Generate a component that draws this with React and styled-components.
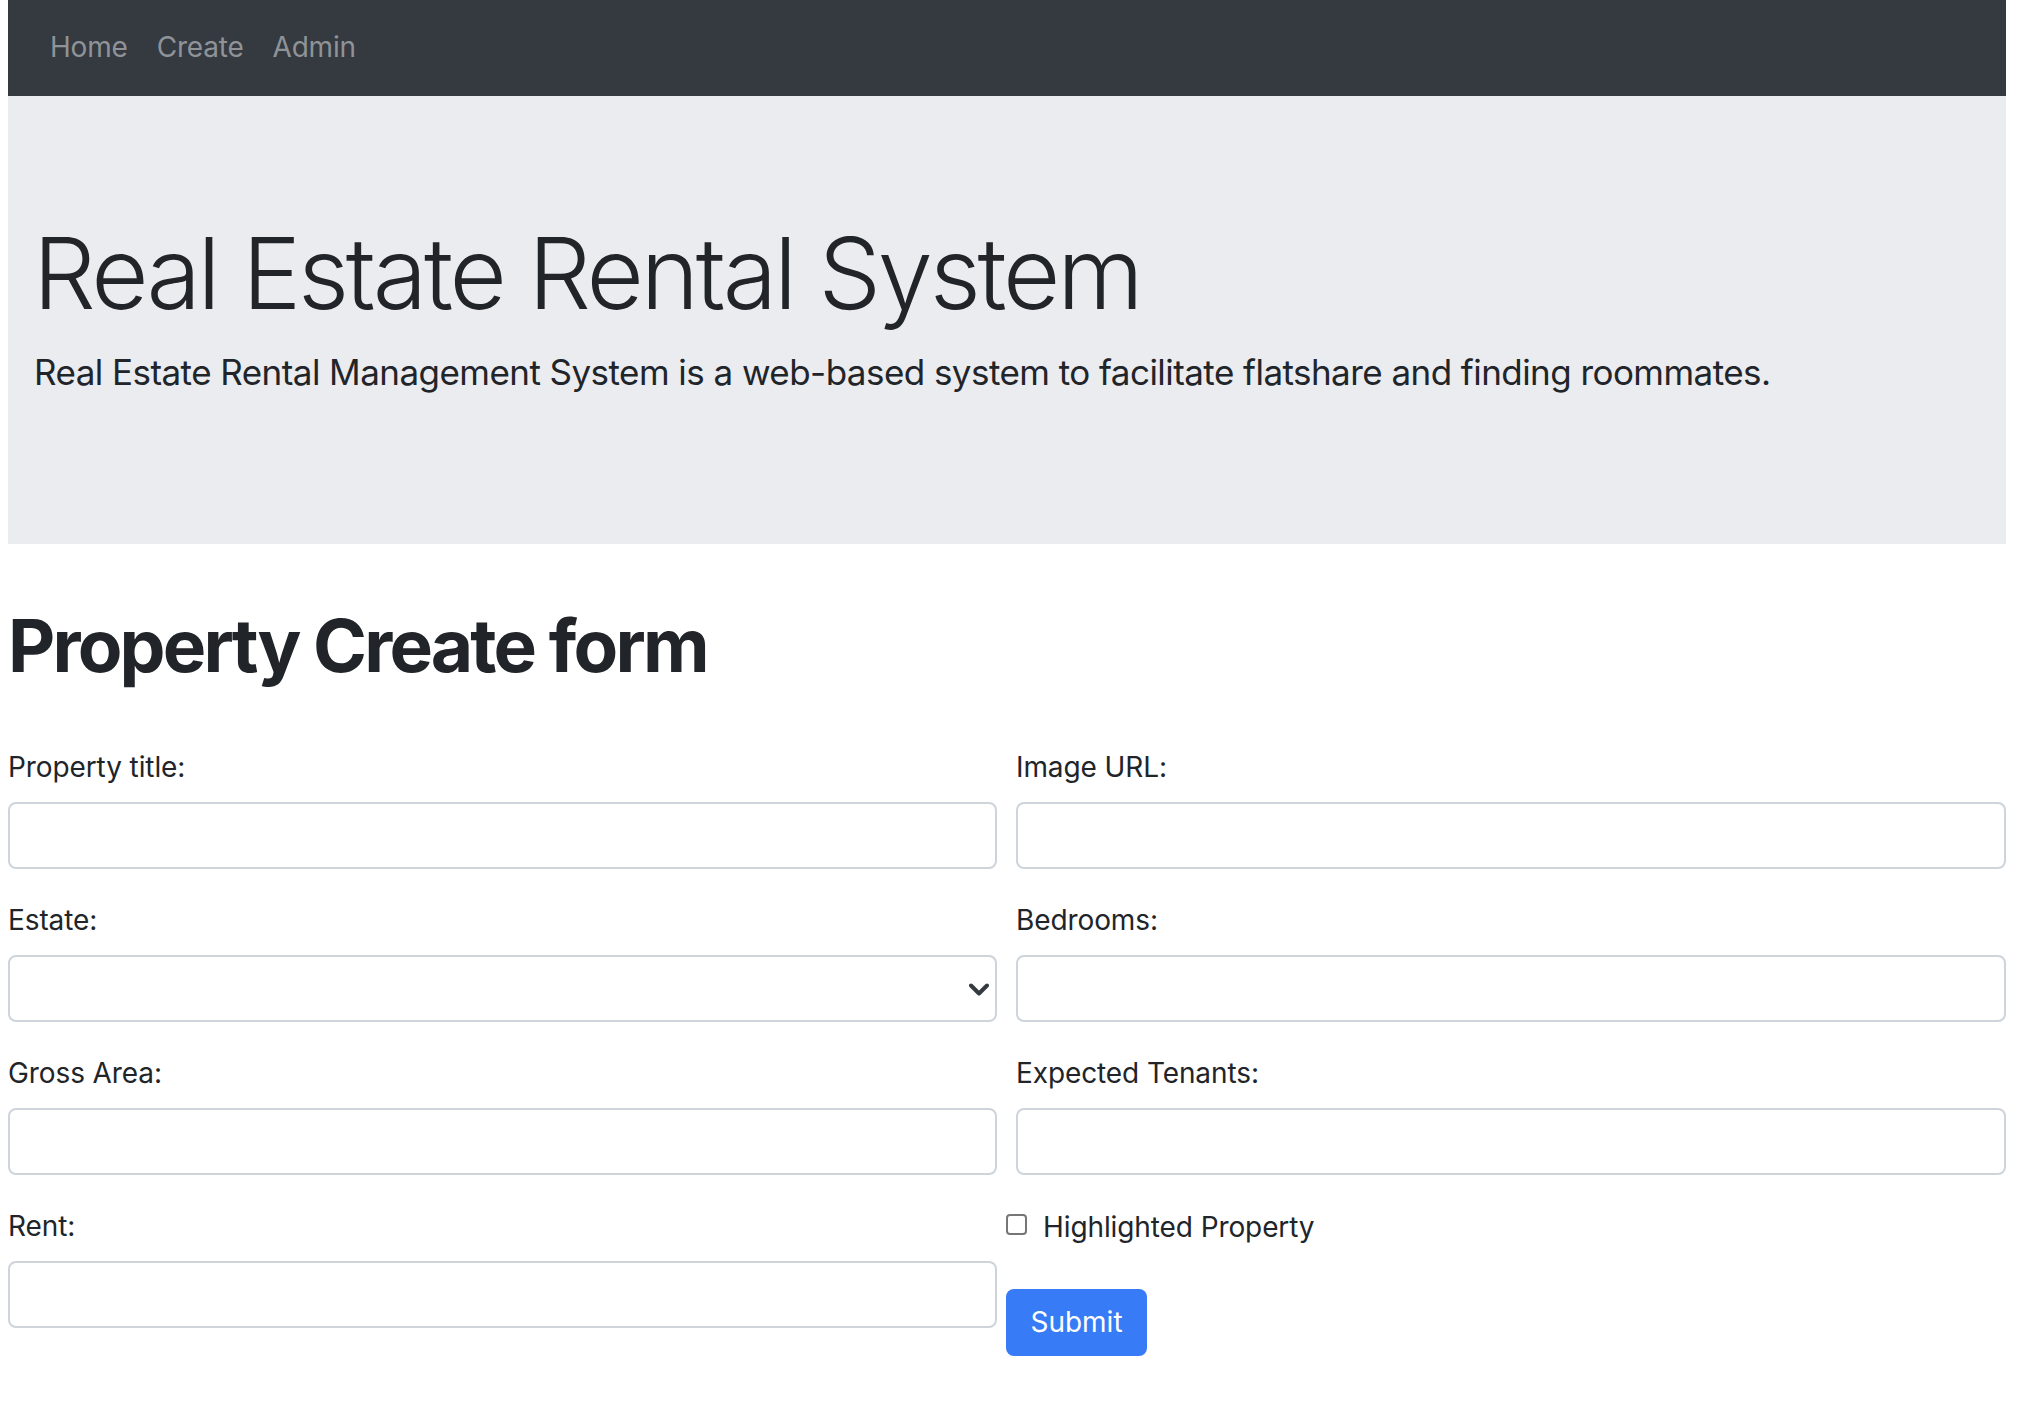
import React from 'react'
import styled, { createGlobalStyle } from 'styled-components'

const GlobalStyle = createGlobalStyle`
  * { box-sizing: border-box; }
  body {
    margin: 0;
    background: #fff;
    color: #212529;
    font-family: Inter, "Noto Sans", "Liberation Sans", sans-serif;
  }
`;

const Page = styled.div`
  padding: 0 18px 0 8px;
`;

const NavBar = styled.nav`
  background-color: #343a40;
  height: 96px;
  display: flex;
  align-items: center;
  gap: 29px;
  padding: 0 0 2px 42px;
`;

const NavLink = styled.a`
  font-size: 28px;
  color: #8f9398;
  text-decoration: none;
  letter-spacing: -0.2px;
`;

const Jumbotron = styled.header`
  background-color: #ebecf0;
  height: 448px;
  padding: 118px 27px 0 25px;
`;

const Display = styled.h1`
  margin: 0 0 13px 0;
  font-size: 99px;
  font-weight: 350;
  line-height: 1.2;
  letter-spacing: -3.2px;
`;

const Lead = styled.p`
  margin: 0 0 0 1px;
  font-size: 35px;
  font-weight: 400;
  line-height: 1.5;
  letter-spacing: -0.55px;
`;

const FormTitle = styled.h2`
  margin: 58px 0 56px 0;
  font-size: 73px;
  font-weight: 700;
  line-height: 1.2;
  letter-spacing: -2.8px;
`;

const FormGrid = styled.form`
  display: grid;
  grid-template-columns: 989px 1fr;
  column-gap: 9px;
`;

const Group = styled.div`
  display: flex;
  flex-direction: column;
  align-items: flex-start;
  padding-left: ${p => (p.$inset ? '10px' : '0')};
  margin-bottom: 30px;
`;

const Label = styled.label`
  font-size: 28px;
  line-height: 42px;
  margin-bottom: 14px;
  letter-spacing: -0.1px;
`;

const Input = styled.input`
  width: 100%;
  height: 67px;
  border: 2px solid #ced4da;
  border-radius: 8px;
  background: #fff;
  font: inherit;
  font-size: 28px;
  padding: 0 20px;
`;

const SelectBox = styled.div`
  position: relative;
  width: 100%;
`;

const Select = styled.select`
  width: 100%;
  height: 67px;
  border: 2px solid #ced4da;
  border-radius: 8px;
  background: #fff;
  appearance: none;
  font: inherit;
  font-size: 28px;
  padding: 0 20px;
`;

const Chevron = styled.svg`
  position: absolute;
  right: 8px;
  top: 28px;
  pointer-events: none;
`;

const CheckRow = styled.label`
  display: flex;
  align-items: center;
  gap: 16px;
  height: 42px;
  margin-top: 1px;
  font-size: 28px;
  letter-spacing: -0.1px;
`;

const CheckBox = styled.span`
  width: 21px;
  height: 21px;
  border: 2px solid #767676;
  border-radius: 4px;
  margin-top: -4px;
  background: #fff;
`;

const SubmitButton = styled.button`
  margin-top: 41px;
  width: 141px;
  height: 67px;
  border: none;
  border-radius: 8px;
  background-color: #377bf6;
  color: #fff;
  font: inherit;
  font-size: 28px;
  cursor: pointer;
`;

function Field({ label, inset, children }) {
  return (
    <Group $inset={inset}>
      <Label>{label}</Label>
      {children}
    </Group>
  );
}

export default function App() {
  return (
    <>
      <GlobalStyle />
      <Page>
        <NavBar>
          <NavLink href="#">Home</NavLink>
          <NavLink href="#">Create</NavLink>
          <NavLink href="#">Admin</NavLink>
        </NavBar>
        <Jumbotron>
          <Display>Real Estate Rental System</Display>
          <Lead>
            Real Estate Rental Management System is a web-based system to facilitate flatshare and finding roommates.
          </Lead>
        </Jumbotron>
        <FormTitle>Property Create form</FormTitle>
        <FormGrid onSubmit={e => e.preventDefault()}>
          <Field label="Property title:">
            <Input type="text" />
          </Field>
          <Field label="Image URL:" inset>
            <Input type="text" />
          </Field>
          <Field label="Estate:">
            <SelectBox>
              <Select defaultValue="">
                <option value=""></option>
              </Select>
              <Chevron width="20" height="13" viewBox="0 0 20 13">
                <path d="M2 2.5l8 8 8-8" fill="none" stroke="#343a40" strokeWidth="4" strokeLinecap="round" strokeLinejoin="round" />
              </Chevron>
            </SelectBox>
          </Field>
          <Field label="Bedrooms:" inset>
            <Input type="number" />
          </Field>
          <Field label="Gross Area:">
            <Input type="number" />
          </Field>
          <Field label="Expected Tenants:" inset>
            <Input type="number" />
          </Field>
          <Field label="Rent:">
            <Input type="number" />
          </Field>
          <Group>
            <CheckRow>
              <CheckBox />
              Highlighted Property
            </CheckRow>
            <SubmitButton type="submit">Submit</SubmitButton>
          </Group>
        </FormGrid>
      </Page>
    </>
  );
}
